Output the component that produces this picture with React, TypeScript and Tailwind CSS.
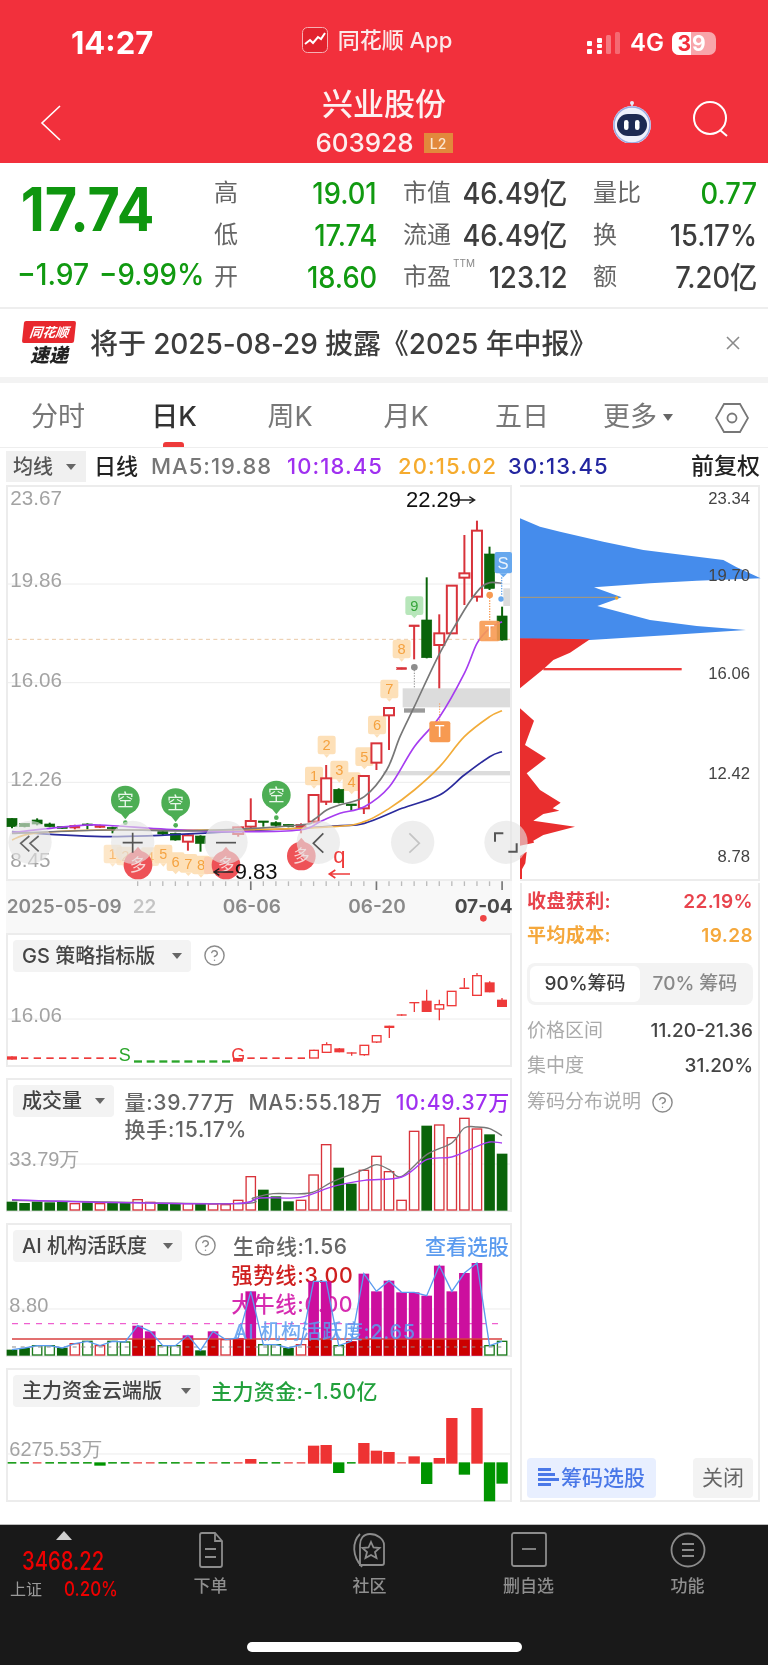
import { CircleHelp } from "lucide-react";

type Pt = [number, number];
const cx = (i: number) => 36 + 37.7 * i;
const RED = "#d8333b";
const DKGREEN = "#0a640a";
const NUMFONT = "'Liberation Sans', sans-serif";

// catmull-rom, so the moving averages come out curved
function smooth(pts: Pt[]) {
  let d = `M${pts[0][0]} ${pts[0][1]}`;
  for (let i = 0; i < pts.length - 1; i++) {
    const p0 = pts[i - 1] || pts[i];
    const p1 = pts[i];
    const p2 = pts[i + 1];
    const p3 = pts[i + 2] || p2;
    d += ` C${p1[0] + (p2[0] - p0[0]) / 6} ${p1[1] + (p2[1] - p0[1]) / 6} ${p2[0] - (p3[0] - p1[0]) / 6} ${p2[1] - (p3[1] - p1[1]) / 6} ${p2[0]} ${p2[1]}`;
  }
  return d;
}

// i, wickTop, bodyTop, bodyBottom, wickBottom, kind: r hollow red, f filled, g green
type Candle = [number, number, number, number, number, "r" | "f" | "g"];
const candles: Candle[] = [
  [0, 1015, 1015, 1040, 1045, "g"],
  [1, 1030, 1030, 1040, 1042, "g"],
  [2, 1015, 1020, 1032, 1036, "g"],
  [3, 1028, 1032, 1040, 1042, "g"],
  [4, 1040, 1040, 1045, 1046, "g"],
  [5, 1034, 1036, 1044, 1048, "f"],
  [6, 1030, 1032, 1036, 1048, "g"],
  [7, 1034, 1036, 1042, 1044, "f"],
  [8, 1040, 1042, 1046, 1060, "g"],
  [12, 1052, 1055, 1062, 1066, "g"],
  [13, 1058, 1060, 1080, 1082, "g"],
  [14, 1062, 1066, 1085, 1112, "r"],
  [15, 1066, 1068, 1090, 1115, "g"],
  [18, 1040, 1042, 1062, 1070, "r"],
  [19, 955, 1023, 1040, 1046, "r"],
  [20, 1023, 1023, 1027, 1040, "g"],
  [21, 1024, 1028, 1036, 1040, "g"],
  [22, 1033, 1033, 1040, 1042, "g"],
  [23, 1030, 1033, 1043, 1060, "f"],
  [24, 945, 945, 1025, 1030, "r"],
  [25, 855, 895, 965, 975, "r"],
  [26, 925, 928, 968, 970, "g"],
  [27, 972, 972, 977, 992, "g"],
  [28, 888, 888, 985, 1002, "r"],
  [29, 790, 790, 848, 870, "r"],
  [30, 684, 684, 706, 810, "r"],
  [31, 563, 563, 568, 568, "f"],
  [32, 435, 435, 440, 538, "f"],
  [33, 292, 420, 533, 535, "g"],
  [34, 403, 460, 495, 625, "r"],
  [35, 317, 317, 460, 462, "r"],
  [36, 165, 280, 293, 375, "r"],
  [37, 122, 152, 350, 365, "r"],
  [38, 200, 222, 325, 330, "g"],
  [39, 380, 408, 480, 482, "g"],
];

function CandleMark({ c }: { c: Candle }) {
  const [i, wt, bt, bb, wb, kind] = c;
  const x = cx(i);
  const col = kind === "g" ? DKGREEN : RED;
  return (
    <g>
      <line x1={x} x2={x} y1={wt} y2={wb} stroke={col} strokeWidth={6} />
      <rect
        x={x - 15}
        y={bt}
        width={30}
        height={bb - bt}
        fill={kind === "r" ? "#fff" : col}
        stroke={col}
        strokeWidth={kind === "r" ? 6 : 2}
      />
    </g>
  );
}

function Tag({ x, y, t, green, faded }: { x: number; y: number; t: string; green?: boolean; faded?: boolean }) {
  return (
    <g opacity={faded ? 0.75 : 1}>
      <rect x={x - 27} y={y - 28} width={54} height={56} rx={7} fill={green ? "#b7e6ba" : "#fde0b8"} />
      <path d={`M${x - 9} ${y + 28}L${x} ${y + 38}L${x + 9} ${y + 28}Z`} fill={green ? "#b7e6ba" : "#fde0b8"} />
      <text x={x} y={y + 16} textAnchor="middle" fontSize={44} fill={green ? "#35a53a" : "#f5a240"} fontFamily={NUMFONT}>
        {t}
      </text>
    </g>
  );
}

function Kong({ x, y }: { x: number; y: number }) {
  return (
    <g>
      <circle cx={x} cy={y} r={43} fill="#4dae54" />
      <path d={`M${x - 16} ${y + 38}L${x} ${y + 58}L${x + 16} ${y + 38}Z`} fill="#4dae54" />
      <circle cx={x} cy={y + 68} r={7} fill="#4dae54" />
      <text x={x} y={y + 18} textAnchor="middle" fontSize={50} fill="#e9f7ea">
        空
      </text>
    </g>
  );
}

function Duo({ x, y }: { x: number; y: number }) {
  return (
    <g>
      <circle cx={x} cy={y} r={43} fill="#ee5257" />
      <path d={`M${x - 14} ${y - 38}L${x} ${y - 55}L${x + 14} ${y - 38}Z`} fill="#ee5257" />
      <text x={x} y={y + 18} textAnchor="middle" fontSize={50} fill="#f9d5d5">
        多
      </text>
    </g>
  );
}

function MainChart() {
  const grey: Pt[] = [[36, 1060], [330, 1050], [600, 1052], [900, 1035], [940, 1020], [980, 990], [1018, 975], [1093, 950], [1160, 870], [1200, 770], [1243, 680], [1319, 520], [1393, 390], [1440, 325], [1470, 308], [1506, 310]];
  const purple: Pt[] = [[36, 1058], [200, 1040], [300, 1035], [500, 1048], [700, 1055], [900, 1050], [960, 1025], [1020, 1000], [1093, 980], [1168, 920], [1243, 800], [1319, 710], [1393, 580], [1431, 490], [1469, 445], [1506, 425]];
  const orange: Pt[] = [[36, 1080], [100, 1060], [300, 1050], [700, 1050], [1000, 1040], [1093, 1025], [1168, 985], [1243, 930], [1319, 860], [1393, 770], [1469, 710], [1506, 692]];
  const navy: Pt[] = [[36, 1055], [330, 1070], [700, 1055], [1000, 1038], [1093, 1030], [1206, 985], [1319, 945], [1393, 885], [1469, 830], [1506, 815]];
  return (
    <svg viewBox="24 21 1506 1176" className="block h-full w-full overflow-visible">
      {[312, 608, 907].map((y) => (
        <line key={y} x1={24} x2={1530} y1={y} y2={y} stroke="#ececec" strokeWidth={3} />
      ))}
      <line x1={24} x2={1530} y1={478} y2={478} stroke="#eac9a6" strokeWidth={3} strokeDasharray="12 10" />
      <rect x={1208} y={625} width={322} height={57} fill="#dcdcdc" />
      <rect x={1150} y={873} width={380} height={13} fill="#dcdcdc" />
      <rect x={1510} y={325} width={20} height={53} fill="#dcdcdc" />

      {[["23.67", 75], ["19.86", 322], ["16.06", 620], ["12.26", 917], ["8.45", 1160]].map(([t, y]) => (
        <text key={t} x={31} y={y} fontSize={62} fill="#a3a3a3" fontFamily={NUMFONT}>
          {t}
        </text>
      ))}

      <Tag x={338} y={1122} t="1" faded />
      <Tag x={376} y={1128} t="2" faded />
      <Tag x={450} y={1130} t="4" faded />
      <Tag x={490} y={1122} t="5" />
      <Tag x={527} y={1145} t="6" />
      <Tag x={565} y={1150} t="7" />
      <Tag x={603} y={1155} t="8" />
      <rect x={612} y={1130} width={50} height={52} rx={6} fill="#fbcdb0" />
      <Tag x={942} y={888} t="1" />
      <Tag x={980} y={795} t="2" />
      <Tag x={1018} y={870} t="3" />
      <Tag x={1055} y={905} t="4" />
      <Tag x={1093} y={830} t="5" />
      <Tag x={1131} y={735} t="6" />
      <Tag x={1168} y={627} t="7" />
      <Tag x={1205} y={507} t="8" />
      <Tag x={1243} y={377} t="9" green />

      <line x1={1243} x2={1243} y1={562} y2={625} stroke="#8d8d8d" strokeWidth={3} strokeDasharray="4 4" />
      <circle cx={1243} cy={562} r={10} fill="#8d8d8d" />
      <rect x={1212} y={685} width={63} height={13} fill="#9a9a9a" />
      <line x1={1319} x2={1319} y1={670} y2={725} stroke="#f79a52" strokeWidth={3} strokeDasharray="4 4" />
      <line x1={1469} x2={1469} y1={345} y2={425} stroke="#f79a52" strokeWidth={4} strokeDasharray="4 4" />

      {candles.map((c) => (
        <CandleMark key={c[0]} c={c} />
      ))}

      <path d={smooth(navy)} fill="none" stroke="#2a2a9c" strokeWidth={5} />
      <path d={smooth(orange)} fill="none" stroke="#f2ac3a" strokeWidth={5} />
      <path d={smooth(purple)} fill="none" stroke="#a63cf0" strokeWidth={5} />
      <path d={smooth(grey)} fill="none" stroke="#777" strokeWidth={5} />

      <rect x={1288} y={724} width={63} height={63} rx={6} fill="#f79a52" />
      <text x={1319} y={772} textAnchor="middle" fontSize={48} fill="#fff" fontFamily={NUMFONT}>T</text>
      <rect x={1438} y={422} width={62} height={62} rx={6} fill="#f79a52" opacity={0.9} />
      <text x={1469} y={470} textAnchor="middle" fontSize={48} fill="#fff" fontFamily={NUMFONT}>T</text>
      <circle cx={1469} cy={345} r={10} fill="#f79a52" />
      <rect x={1484} y={216} width={52} height={64} rx={6} fill="#67a8ee" />
      <path d="M1498 280L1510 292L1522 280Z" fill="#67a8ee" />
      <text x={1509} y={268} textAnchor="middle" fontSize={50} fill="#eaf3fd" fontFamily={NUMFONT}>S</text>
      <line x1={1505} x2={1505} y1={292} y2={345} stroke="#67a8ee" strokeWidth={4} strokeDasharray="4 4" />
      <circle cx={1503} cy={357} r={8} fill="#67a8ee" />

      <Kong x={376} y={960} />
      <Kong x={527} y={968} />
      <Kong x={829} y={945} />
      <Duo x={414} y={1155} />
      <Duo x={678} y={1155} />
      <Duo x={904} y={1128} />

      {[90, 398, 678, 955, 1238, 1518].map((x) => (
        <circle key={x} cx={x} cy={1087} r={65} fill="#e4e4e4" fillOpacity={0.62} />
      ))}
      <path d="M88 1068L62 1090L88 1114M116 1068L90 1090L116 1114" fill="none" stroke="#666" strokeWidth={5} />
      <path d="M368 1088H428M398 1058V1118" fill="none" stroke="#555" strokeWidth={5} />
      <path d="M648 1088H708" fill="none" stroke="#555" strokeWidth={5} />
      <path d="M970 1060L940 1090L970 1118" fill="none" stroke="#555" strokeWidth={5} />
      <path d="M1228 1060L1258 1090L1228 1118" fill="none" stroke="#c4c4c4" strokeWidth={5} />
      <path d="M1485 1085V1060H1510M1550 1090V1115H1525" fill="none" stroke="#555" strokeWidth={6} />

      <text x={1218} y={82} fontSize={66} fontWeight={500} fill="#111" fontFamily={NUMFONT}>
        22.29
      </text>
      <path d="M1366 60H1424M1408 50L1424 60L1408 70" fill="none" stroke="#222" strokeWidth={4} />
      <path d="M700 1176H642M658 1166L642 1176L658 1186" fill="none" stroke="#222" strokeWidth={4} />
      <text x={704} y={1198} fontSize={66} fontWeight={500} fill="#111" fontFamily={NUMFONT}>
        9.83
      </text>
      <text x={1018} y={1150} textAnchor="middle" fontSize={66} fill="#ee3b3b" fontFamily={NUMFONT}>
        q
      </text>
      <path d="M1050 1182H988M1006 1170L988 1182L1006 1194" fill="none" stroke="#ee3b3b" strokeWidth={5} />
    </svg>
  );
}

function ChipChart() {
  return (
    <svg viewBox="30 21 714 1176" className="block h-full w-full overflow-visible">
      <path
        d="M30 115L90 140L150 155L280 185L400 210L640 240L680 262L752 295L560 302L420 310L252 322L335 352L262 378L420 420L560 438L708 450L480 465L240 480L30 476Z"
        fill="#458cec"
      />
      <path d="M30 475L240 478L180 518L130 540L100 568L30 625Z" fill="#e92e2e" />
      <rect x={100} y={564} width={415} height={7} fill="#ee3a3a" />
      <line x1={30} x2={320} y1={352} y2={352} stroke="#b09a70" strokeWidth={3} />
      <circle cx={320} cy={354} r={5} fill="#f5a623" />
      <path
        d="M30 685L72 722L45 795L108 835L50 880L90 930L152 968L128 985L148 992L100 1002L70 1022L195 1040L100 1065L70 1082L72 1088L30 1097Z"
        fill="#e92e2e"
      />
      <path d="M30 1128L50 1115L46 1150L36 1168L36 1197L30 1197Z" fill="#e92e2e" />
      {[["23.34", 72], ["19.70", 302], ["16.06", 597], ["12.42", 897], ["8.78", 1147]].map(([t, y]) => (
        <text key={t} x={720} y={y} textAnchor="end" fontSize={50} fontWeight={500} fill="#444" fontFamily={NUMFONT}>
          {t}
        </text>
      ))}
    </svg>
  );
}

function Axis() {
  return (
    <svg viewBox="18 1205 1518 156" className="block h-full w-full">
      {Array.from({ length: 40 }, (_, i) => cx(i)).map((x, i) => {
        if (i < 10) return null;
        const big = i === 19 || i === 29 || i === 39;
        return <line key={i} x1={x} x2={x} y1={1206} y2={big ? 1232 : 1220} stroke={big ? "#777" : "#bbb"} strokeWidth={big ? 5 : 4} />;
      })}
      <text x={20} y={1300} fontSize={57} fontWeight={600} fill="#8a8a8a">2025-05-09</text>
      <text x={398} y={1300} fontSize={57} fontWeight={600} fill="#c4c4c4">22</text>
      <text x={668} y={1300} fontSize={57} fontWeight={600} fill="#8a8a8a">06-06</text>
      <text x={1045} y={1300} fontSize={57} fontWeight={600} fill="#8a8a8a">06-20</text>
      <text x={1364} y={1300} fontSize={57} fontWeight={700} fill="#4a4a4a">07-04</text>
      <circle cx={1450} cy={1317} r={10} fill="#ee4444" />
    </svg>
  );
}

function Picker({ label, w }: { label: string; w: string }) {
  return (
    <div className={`flex h-[32px] items-center justify-between rounded-[4px] bg-[#f3f3f3] pl-[9px] pr-[9px] text-[20px] font-medium text-[#444] ${w}`}>
      <span className="whitespace-nowrap">{label}</span>
      <span className="h-0 w-0 border-x-[5px] border-t-[6px] border-x-transparent border-t-[#666]" />
    </div>
  );
}

function Help({ className }: { className: string }) {
  return <CircleHelp className={`text-[#8c8c8c] ${className}`} size={23} strokeWidth={1.5} />;
}

function Panel({ viewBox, header, children }: { viewBox: string; header: React.ReactNode; children: React.ReactNode }) {
  return (
    <div className="relative h-[134px] border-2 border-[#ececec] bg-white">
      <svg viewBox={viewBox} preserveAspectRatio="none" className="absolute inset-0 h-full w-full overflow-visible">
        {children}
      </svg>
      <div className="relative flex items-start pl-[5px] pt-[5px]">{header}</div>
    </div>
  );
}

function GsPanel() {
  const reds = [74, 112, 150, 188, 225, 263, 300, 338, 753, 791, 828, 866, 904];
  const greens = [414, 452, 490, 527, 565, 603, 640, 678];
  const hollow: [number, number, number, number, number][] = [
    [942, 360, 362, 385, 385],
    [980, 338, 345, 368, 370],
    [1093, 347, 347, 375, 378],
    [1130, 318, 318, 337, 340],
    [1318, 210, 225, 238, 272],
    [1355, 185, 185, 228, 228],
    [1431, 130, 138, 197, 197],
  ];
  const filled: [number, number, number, number, number][] = [
    [36, 380, 380, 390, 390],
    [714, 385, 385, 396, 396],
    [1018, 355, 356, 368, 368],
    [1055, 368, 368, 372, 378],
    [1168, 288, 288, 295, 325],
    [1205, 254, 254, 258, 258],
    [1243, 217, 217, 221, 247],
    [1280, 180, 213, 247, 247],
    [1393, 174, 174, 178, 145],
    [1469, 155, 158, 188, 188],
    [1506, 205, 210, 232, 232],
  ];
  return (
    <Panel
      viewBox="24 16 1506 390"
      header={
        <>
          <Picker label="GS 策略指标版" w="w-[178px]" />
          <Help className="ml-[12px] mt-[4px]" />
        </>
      }
    >
      <line x1={24} x2={1530} y1={268} y2={268} stroke="#ececec" strokeWidth={3} />
      <text x={31} y={276} fontSize={62} fill="#a3a3a3" fontFamily={NUMFONT}>16.06</text>
      {reds.map((x) => (
        <rect key={x} x={x - 11} y={383} width={22} height={5} fill="#ee3a3a" />
      ))}
      {greens.map((x) => (
        <rect key={x} x={x - 12} y={392} width={24} height={7} fill="#2aa52a" />
      ))}
      {hollow.map(([x, wt, bt, bb, wb]) => (
        <g key={x}>
          <line x1={x} x2={x} y1={wt} y2={wb} stroke="#ee3a3a" strokeWidth={4} />
          <rect x={x - 13} y={bt} width={26} height={bb - bt} fill="#fff" stroke="#ee3a3a" strokeWidth={4} />
        </g>
      ))}
      {filled.map(([x, wt, bt, bb, wb]) => (
        <g key={x}>
          <line x1={x} x2={x} y1={wt} y2={wb} stroke="#ee3a3a" strokeWidth={4} />
          <rect x={x - 15} y={bt} width={30} height={bb - bt} fill="#ee3a3a" />
        </g>
      ))}
      <line x1={1380} x2={1406} y1={176} y2={176} stroke="#ee3a3a" strokeWidth={4} />
      <text x={356} y={394} fontSize={54} fill="#2aa52a" fontFamily={NUMFONT}>S</text>
      <text x={694} y={394} fontSize={54} fill="#ee3a3a" fontFamily={NUMFONT}>G</text>
    </Panel>
  );
}

function VolumePanel() {
  // top of each bar, r = hollow red, g = solid green
  const bars: [number, "r" | "g"][] = [
    [816, "g"], [820, "g"], [816, "g"], [818, "g"], [816, "g"], [822, "r"], [818, "g"], [822, "r"], [818, "g"], [820, "g"],
    [810, "r"], [818, "r"], [820, "g"], [820, "g"], [822, "r"], [820, "g"], [823, "r"], [825, "r"], [812, "r"], [741, "r"],
    [780, "g"], [800, "g"], [815, "g"], [812, "r"], [736, "r"], [645, "r"], [714, "g"], [762, "g"], [722, "r"], [680, "r"],
    [726, "r"], [812, "r"], [605, "r"], [588, "g"], [586, "r"], [624, "r"], [566, "r"], [598, "r"], [614, "g"], [672, "g"],
  ];
  const grey: Pt[] = [[36, 812], [700, 822], [760, 805], [820, 792], [930, 790], [1000, 755], [1093, 720], [1130, 705], [1168, 720], [1205, 740], [1280, 675], [1355, 640], [1393, 595], [1431, 592], [1469, 597], [1506, 618]];
  const purple: Pt[] = [[36, 810], [300, 818], [700, 822], [780, 805], [900, 803], [1000, 770], [1093, 752], [1205, 742], [1280, 690], [1355, 682], [1431, 650], [1469, 637], [1506, 640]];
  return (
    <Panel
      viewBox="24 451 1506 390"
      header={
        <>
          <Picker label="成交量" w="w-[102px]" />
          <div className="ml-[10px] mt-[4px] whitespace-nowrap text-[21px] font-medium leading-[27px] tracking-[0.8px] text-[#666]">
            <div className="flex gap-[13px]">
              <span>量:39.77万</span>
              <span>MA5:55.18万</span>
              <span className="text-[#a030f0]">10:49.37万</span>
            </div>
            <div>换手:15.17%</div>
          </div>
        </>
      }
    >
      <line x1={24} x2={1530} y1={703} y2={703} stroke="#ececec" strokeWidth={3} />
      <text x={28} y={710} fontSize={60} fill="#a3a3a3" fontFamily={NUMFONT}>33.79万</text>
      {bars.map(([top, kind], i) =>
        kind === "g" ? (
          <rect key={i} x={cx(i) - 16} y={top} width={32} height={843 - top} fill={DKGREEN} />
        ) : (
          <rect key={i} x={cx(i) - 14} y={top} width={28} height={841 - top} fill="#fff" stroke={RED} strokeWidth={4} />
        ),
      )}
      <path d={smooth(grey)} fill="none" stroke="#777" strokeWidth={4} />
      <path d={smooth(purple)} fill="none" stroke="#a63cf0" strokeWidth={4} />
    </Panel>
  );
}

function AiPanel() {
  // bar top, m magenta, f solid green, h hollow green, r hollow red
  const bars: [number, "m" | "f" | "h" | "r"][] = [
    [390, "f"], [385, "f"], [378, "h"], [378, "h"], [385, "f"], [372, "r"], [365, "h"], [378, "r"], [365, "h"], [367, "h"],
    [318, "m"], [335, "m"], [378, "h"], [378, "h"], [347, "m"], [392, "f"], [335, "m"], [360, "r"], [355, "m"], [215, "m"],
    [375, "h"], [375, "h"], [385, "f"], [375, "r"], [185, "m"], [185, "m"], [378, "h"], [365, "m"], [162, "m"], [215, "m"],
    [183, "m"], [218, "m"], [218, "m"], [228, "m"], [138, "m"], [215, "m"], [160, "m"], [130, "m"], [378, "h"], [365, "h"],
  ];
  const line = bars.map(([t], i) => `${cx(i)},${t}`).join(" ");
  return (
    <Panel
      viewBox="24 16 1506 390"
      header={
        <>
          <Picker label="AI 机构活跃度" w="w-[169px]" />
          <Help className="ml-[12px] mt-[4px]" />
          <span className="ml-[16px] mt-[1px] text-[21px] font-medium tracking-[0.5px] text-[#666]">生命线:1.56</span>
          <span className="ml-auto mr-[1px] mt-[1px] text-[21px] font-medium text-[#5b9bef]">查看选股</span>
        </>
      }
    >
      <line x1={24} x2={1530} y1={268} y2={268} stroke="#ececec" strokeWidth={3} />
      <text x={28} y={276} fontSize={60} fill="#a3a3a3" fontFamily={NUMFONT}>8.80</text>
      <text x={694} y={190} fontSize={64} fontWeight={500} letterSpacing={2} fill="#cf1f1f">强势线:3.00</text>
      <text x={694} y={277} fontSize={64} fontWeight={500} letterSpacing={2} fill="#d62bb0">大牛线:6.00</text>
      <line x1={36} x2={1506} y1={312} y2={312} stroke="#ef5fd0" strokeWidth={4} strokeDasharray="18 18" />
      {bars.map(([top, kind], i) => {
        const x = cx(i);
        if (kind === "m")
          return (
            <g key={i}>
              <rect x={x - 16} y={top} width={32} height={408 - top} fill="#cc0f9e" />
              <rect x={x - 16} y={Math.max(top, 358)} width={32} height={408 - Math.max(top, 358)} fill="#cc0000" />
            </g>
          );
        if (kind === "f") return <rect key={i} x={x - 16} y={top} width={32} height={408 - top} fill={DKGREEN} />;
        return <rect key={i} x={x - 14} y={top} width={28} height={406 - top} fill="#fff" stroke={kind === "r" ? RED : "#1a7a1a"} strokeWidth={4} />;
      })}
      <line x1={36} x2={1506} y1={358} y2={358} stroke="#d94040" strokeWidth={4} />
      <line x1={36} x2={1506} y1={382} y2={382} stroke="#8a8a8a" strokeWidth={3} strokeDasharray="12 14" />
      <polyline points={line} fill="none" stroke="#5b9bef" strokeWidth={4} />
      <text x={700} y={358} fontSize={60} fontWeight={500} letterSpacing={2} fill="#5b9bef" fillOpacity={0.85}>AI 机构活跃度:2.65</text>
    </Panel>
  );
}

function FundPanel() {
  const dashes: [number, string][] = [
    [0, "g"], [1, "g"], [2, "r"], [3, "g"], [4, "g"], [5, "g"], [6, "g"], [8, "g"], [9, "g"], [10, "r"], [11, "r"], [12, "g"], [13, "g"],
    [14, "r"], [15, "g"], [16, "r"], [17, "g"], [18, "r"], [20, "g"], [21, "g"], [22, "r"], [23, "r"], [27, "g"], [31, "r"],
  ];
  const bars: [number, number, number, string][] = [
    [7, 728, 738, "g"], [19, 718, 732, "r"], [24, 678, 732, "r"], [25, 676, 732, "r"], [26, 728, 760, "g"], [28, 670, 732, "r"],
    [29, 693, 732, "r"], [30, 697, 732, "r"], [32, 710, 732, "r"], [33, 728, 793, "g"], [34, 715, 732, "r"], [35, 595, 732, "r"],
    [36, 728, 765, "g"], [37, 565, 732, "r"], [38, 728, 845, "g"], [39, 728, 792, "g"],
  ];
  return (
    <Panel
      viewBox="24 451 1506 390"
      header={
        <>
          <Picker label="主力资金云端版" w="w-[187px]" />
          <span className="ml-[11px] mt-[1px] whitespace-nowrap text-[21px] font-medium tracking-[0.4px] text-[#22a03c]">主力资金:-1.50亿</span>
        </>
      }
    >
      <line x1={24} x2={1530} y1={703} y2={703} stroke="#ececec" strokeWidth={3} />
      <text x={28} y={710} fontSize={60} fill="#a3a3a3" fontFamily={NUMFONT}>6275.53万</text>
      {dashes.map(([i, c]) => (
        <rect key={i} x={cx(i) - 13} y={727} width={26} height={5} fill={c === "g" ? "#1f9e1f" : "#ee6a6a"} />
      ))}
      {bars.map(([i, t, b, c]) => (
        <rect key={i} x={cx(i) - 17} y={t} width={34} height={b - t} fill={c === "g" ? "#009400" : "#ee3333"} />
      ))}
    </Panel>
  );
}

function NavItem({ label, children }: { label: string; children: React.ReactNode }) {
  return (
    <div className="flex w-[159px] flex-col items-center">
      <svg viewBox="0 0 40 36" className="h-[36px] w-[40px]" fill="none" stroke="#8c8c8c" strokeWidth={1.8}>
        {children}
      </svg>
      <span className="mt-[6px] text-[17px] font-medium leading-[24px] text-[#8f8f8f]">{label}</span>
    </div>
  );
}

function QuoteCell({ label, value, green, sup }: { label: string; value: string; green?: boolean; sup?: boolean }) {
  return (
    <div className="flex items-center justify-between whitespace-nowrap">
      <span className="relative text-[24px] text-[#666]">
        {label}
        {sup && <span className="absolute left-[50px] top-[-3px] text-[10px] text-[#888]">TTM</span>}
      </span>
      <span className={`inline-block origin-right scale-x-[0.91] text-[30px] font-medium ${green ? "text-[#119a11]" : "text-[#3d3d3d]"}`}>
        {value}
      </span>
    </div>
  );
}

export default function App() {
  return (
    <div className="relative h-[1665px] w-[768px] overflow-hidden bg-white font-[Inter,'Noto_Sans_CJK_SC',sans-serif] blur-[0.7px]">
      <header className="h-[163px] bg-[#f2303c] text-white">
        <div className="grid h-[86px] grid-cols-[1fr_auto_1fr] items-center">
          <span className="pl-[71px] text-[31px] font-bold">14:27</span>
          <div className="flex -translate-x-[6px] -translate-y-[3px] items-center gap-[10px] pr-[2px]">
            <svg viewBox="0 0 26 26" className="h-[26px] w-[26px]">
              <rect x="0.5" y="0.5" width="25" height="25" rx="5" fill="#e2222e" stroke="#f6b0b4" />
              <path d="M3 17L8 13L11 16L16 10L19 12L23 6" fill="none" stroke="#fff" strokeWidth="2" />
            </svg>
            <span className="text-[22px] font-medium text-[#fbe9ea]">同花顺 App</span>
          </div>
          <div className="flex items-center justify-end gap-[8px] pr-[52px]">
            <svg viewBox="0 0 36 24" className="h-[24px] w-[36px]" fill="#fff">
              <rect x="1" y="10" width="5" height="5" rx="1" />
              <rect x="1" y="18" width="5" height="5" rx="1" />
              <rect x="11" y="7" width="5" height="5" rx="1" />
              <rect x="11" y="13" width="5" height="4" rx="1" />
              <rect x="11" y="19" width="5" height="4" rx="1" />
              <rect x="20" y="4" width="5" height="19" rx="1.5" fillOpacity="0.35" />
              <rect x="29" y="1" width="5" height="22" rx="1.5" fillOpacity="0.28" />
            </svg>
            <span className="text-[24px] font-semibold">4G</span>
            <div className="relative flex h-[23px] w-[44px] items-center overflow-hidden rounded-[7px] bg-[#f8a5aa] text-[21px] font-bold leading-none">
              <span className="flex h-full w-[19px] items-center justify-end bg-white text-[#f2303c]">3</span>
              <span className="pl-[1px] text-white">9</span>
            </div>
          </div>
        </div>
        <div className="grid h-[77px] grid-cols-[1fr_auto_1fr]">
          <svg viewBox="0 0 22 38" className="ml-[40px] mt-[18px] h-[38px] w-[22px]" fill="none" stroke="#fff" strokeWidth="1.6">
            <path d="M20 2L2 19L20 36" />
          </svg>
          <div className="flex flex-col items-center">
            <span className="text-[31px] font-medium leading-[36px] text-[#fdf1f1]">兴业股份</span>
            <div className="mt-[7px] flex items-center gap-[10px]">
              <span className="text-[26px] font-medium leading-[28px] text-[#fdeeee]">603928</span>
              <span className="flex h-[20px] w-[29px] items-center justify-center bg-[#e2893c] text-[14px] font-medium text-[#fbe6d0]">L2</span>
            </div>
          </div>
          <div className="flex items-start justify-end gap-[37px] pr-[38px] pt-[15px]">
            <svg viewBox="0 0 46 42" className="h-[42px] w-[46px]">
              <path d="M23 7V2" stroke="#e4eaf8" strokeWidth="1.5" />
              <circle cx="23" cy="2" r="2" fill="#e4eaf8" />
              <circle cx="23" cy="24" r="19" fill="#eef1fb" />
              <circle cx="23" cy="24" r="18" fill="none" stroke="#9aa9e0" strokeWidth="1.5" />
              <rect x="8" y="13" width="30" height="22" rx="11" fill="#1d2a52" />
              <rect x="15" y="19" width="4.5" height="10" rx="2.2" fill="#fff" />
              <rect x="26" y="19" width="4.5" height="10" rx="2.2" fill="#fff" />
            </svg>
            <svg viewBox="0 0 38 36" className="h-[36px] w-[38px]" fill="none" stroke="#fff" strokeWidth="2">
              <circle cx="18" cy="17" r="16" />
              <path d="M28 29L35 35" />
            </svg>
          </div>
        </div>
      </header>

      <section className="flex h-[146px] border-b-2 border-[#eeeeee]">
        <div className="w-[214px] shrink-0 pl-[17px] pt-[12px] text-[#119a11]">
          <div className="origin-left scale-x-[0.93] pl-[4px] text-[60px] font-bold leading-[68px] text-[#0f960f]">17.74</div>
          <div className="mt-[13px] flex items-center whitespace-nowrap text-[30px] font-medium leading-[36px]">
            <span className="inline-block w-[89px] origin-left scale-x-[0.94]">−1.97</span>
            <span className="inline-block origin-left scale-x-[0.92]">−9.99%</span>
          </div>
        </div>
        <div className="grid h-[135px] w-[546px] grid-cols-[163px_164px_164px] grid-rows-3 gap-x-[26px] pt-[9px]">
          <QuoteCell label="高" value="19.01" green />
          <QuoteCell label="市值" value="46.49亿" />
          <QuoteCell label="量比" value="0.77" green />
          <QuoteCell label="低" value="17.74" green />
          <QuoteCell label="流通" value="46.49亿" />
          <QuoteCell label="换" value="15.17%" />
          <QuoteCell label="开" value="18.60" green />
          <QuoteCell label="市盈" value="123.12" sup />
          <QuoteCell label="额" value="7.20亿" />
        </div>
      </section>

      <section className="flex h-[68px] items-center pl-[22px] pr-[28px]">
        <div className="flex h-[44px] w-[54px] flex-col items-center">
          <span className="flex h-[22px] w-[52px] -skew-x-6 items-center justify-center rounded-[2px] bg-[#e8282e] text-[13px] font-bold italic leading-none text-white">同花顺</span>
          <span className="mt-[3px] text-[19px] font-black italic leading-[19px] text-[#222]">速递</span>
        </div>
        <span className="ml-[14px] mt-[1px] whitespace-nowrap text-[28px] font-medium tracking-[-0.1px] text-[#3d3d3d]">将于 2025-08-29 披露《2025 年中报》</span>
        <svg viewBox="0 0 14 14" className="ml-auto h-[14px] w-[14px]" fill="none" stroke="#8a8a8a" strokeWidth="1.6">
          <path d="M1 1L13 13M13 1L1 13" />
        </svg>
      </section>
      <div className="h-[6px] bg-[#f3f3f3]" />

      <nav className="flex h-[65px] items-center border-b border-[#eeeeee] pt-[5px] text-[27px] text-[#777]">
        <div className="flex w-[116px] justify-center">分时</div>
        <div className="relative flex h-full w-[116px] items-center justify-center font-medium text-[#333]">
          日K
          <span className="absolute bottom-0 left-[47px] h-[5px] w-[21px] rounded-t-[3px] bg-[#ee3a3a]" />
        </div>
        <div className="flex w-[116px] justify-center">周K</div>
        <div className="flex w-[116px] justify-center">月K</div>
        <div className="flex w-[116px] justify-center">五日</div>
        <div className="flex w-[116px] items-center justify-center gap-[6px]">
          更多
          <span className="h-0 w-0 border-x-[5px] border-t-[7px] border-x-transparent border-t-[#666]" />
        </div>
        <svg viewBox="0 0 34 32" className="ml-[19px] h-[32px] w-[34px]" fill="none" stroke="#777" strokeWidth="1.8">
          <path d="M9 2H25L33 16L25 30H9L1 16Z" />
          <circle cx="17" cy="16" r="4.5" />
        </svg>
      </nav>

      <div className="flex h-[37px] items-center whitespace-nowrap pl-[6px] text-[22px] font-medium">
        <div className="flex h-[31px] w-[80px] items-center justify-between bg-[#f0f0f0] pl-[7px] pr-[10px] text-[20px] text-[#555]">
          均线
          <span className="h-0 w-0 border-x-[5px] border-t-[6px] border-x-transparent border-t-[#666]" />
        </div>
        <span className="ml-[8px] text-[#222]">日线</span>
        <span className="ml-[13px] w-[136px] tracking-[1px] text-[#777]">MA5:19.88</span>
        <span className="w-[111px] tracking-[1.1px] text-[#a030f0]">10:18.45</span>
        <span className="w-[110px] tracking-[1.1px] text-[#f5ab2e]">20:15.02</span>
        <span className="tracking-[1.1px] text-[#2326a0]">30:13.45</span>
        <span className="ml-auto pr-[8px] text-[23px] text-[#222]">前复权</span>
      </div>

      <main className="flex h-[1039px] gap-[8px] pl-[6px]">
        <div className="flex w-[506px] shrink-0 flex-col">
          <div className="relative z-10 h-[396px] border-2 border-[#ececec] bg-white">
            <MainChart />
          </div>
          <div className="h-[52px] bg-[#f8f8f8]">
            <Axis />
          </div>
          <div className="flex flex-col gap-[11px]">
            <GsPanel />
            <VolumePanel />
            <AiPanel />
            <FundPanel />
          </div>
        </div>

        <div className="flex h-[1017px] w-[240px] shrink-0 flex-col">
          <div className="h-[396px] border-2 border-l-0 border-[#ececec]">
            <ChipChart />
          </div>
          <div className="mt-[2px] flex flex-1 flex-col border-2 border-t-0 border-[#ececec] px-[5px] pb-[2px]">
            <div className="mt-[4px] flex items-center justify-between whitespace-nowrap text-[19px] font-semibold leading-[30px] tracking-[0.4px] text-[#e8434c]">
              <span>收盘获利:</span>
              <span>22.19%</span>
            </div>
            <div className="mt-[4px] flex items-center justify-between whitespace-nowrap text-[19px] font-semibold leading-[30px] tracking-[0.4px] text-[#f5a83c]">
              <span>平均成本:</span>
              <span>19.28</span>
            </div>
            <div className="mt-[12px] flex h-[42px] items-center rounded-[8px] bg-[#f3f3f3] p-[3px] text-[19px] font-medium">
              <div className="flex h-full w-[110px] items-center justify-center rounded-[6px] bg-white text-[#3d3d3d]">90%筹码</div>
              <div className="flex flex-1 items-center justify-center text-[#888]">70% 筹码</div>
            </div>
            <div className="mt-[10px] flex items-center justify-between text-[19px] leading-[32px]">
              <span className="text-[#aaa]">价格区间</span>
              <span className="font-medium text-[#444]">11.20-21.36</span>
            </div>
            <div className="mt-[3px] flex items-center justify-between text-[19px] leading-[32px]">
              <span className="text-[#aaa]">集中度</span>
              <span className="font-medium text-[#444]">31.20%</span>
            </div>
            <div className="mt-[4px] flex items-center gap-[10px] text-[19px] leading-[32px] text-[#aaa]">
              筹码分布说明
              <Help className="" />
            </div>
            <div className="mt-auto flex justify-between">
              <div className="flex h-[40px] w-[129px] items-center justify-center gap-[1px] rounded-[4px] bg-[#e8efff] text-[21px] font-medium text-[#4a78e8]">
                <svg viewBox="0 0 22 22" className="h-[22px] w-[22px]" fill="#4a78e8">
                  <rect x="0" y="1" width="13" height="3" />
                  <rect x="0" y="6" width="17" height="3" />
                  <rect x="0" y="11" width="21" height="3" />
                  <rect x="0" y="16" width="13" height="3" />
                </svg>
                筹码选股
              </div>
              <div className="flex h-[40px] w-[60px] items-center justify-center rounded-[4px] bg-[#f3f3f3] text-[21px] text-[#666]">关闭</div>
            </div>
          </div>
        </div>
      </main>

      <footer className="flex h-[141px] border-t border-[#bdbdbd] bg-[#191919]">
        <div className="flex w-[131px] shrink-0 flex-col pl-[10px] pt-[6px]">
          <span className="ml-[46px] h-0 w-0 border-x-[8px] border-b-[9px] border-x-transparent border-b-[#cfcfcf]" />
          <span className="ml-[12px] mt-[6px] inline-block origin-left scale-x-[0.81] text-[25px] font-medium leading-[30px] text-[#ee0000]">3468.22</span>
          <div className="-mt-[2px] flex items-center whitespace-nowrap">
            <span className="w-[54px] text-[16px] text-[#9a9a9a]">上证</span>
            <span className="inline-block origin-left scale-x-[0.85] text-[20px] font-medium text-[#ee0000]">0.20%</span>
          </div>
        </div>
        <div className="flex pt-[7px]">
          <NavItem label="下单">
            <path d="M11 1H24L31 9V33Q31 35 29 35H11Q9 35 9 33V3Q9 1 11 1ZM24 1V9H31M14 17H25M14 25H25" />
          </NavItem>
          <NavItem label="社区">
            <path d="M20 2C13 2 10 7 10 13V33H32Q34 33 34 31V13C34 7 27 2 20 2Z" />
            <path d="M10 2C2 10 2 24 12 35" />
            <path d="M21 10L23.5 15.5L29.5 16L25 20L26.5 26L21 23L15.5 26L17 20L12.5 16L18.5 15.5Z" />
          </NavItem>
          <NavItem label="删自选">
            <rect x="3" y="1" width="34" height="33" rx="2" />
            <path d="M13 17H27" />
          </NavItem>
          <NavItem label="功能">
            <circle cx="20" cy="18" r="16.5" />
            <path d="M14 12H26M14 18H26M14 24H26" strokeWidth="2.2" />
          </NavItem>
        </div>
        <div className="absolute bottom-[13px] left-[247px] h-[10px] w-[275px] rounded-full bg-white" />
      </footer>
    </div>
  );
}
